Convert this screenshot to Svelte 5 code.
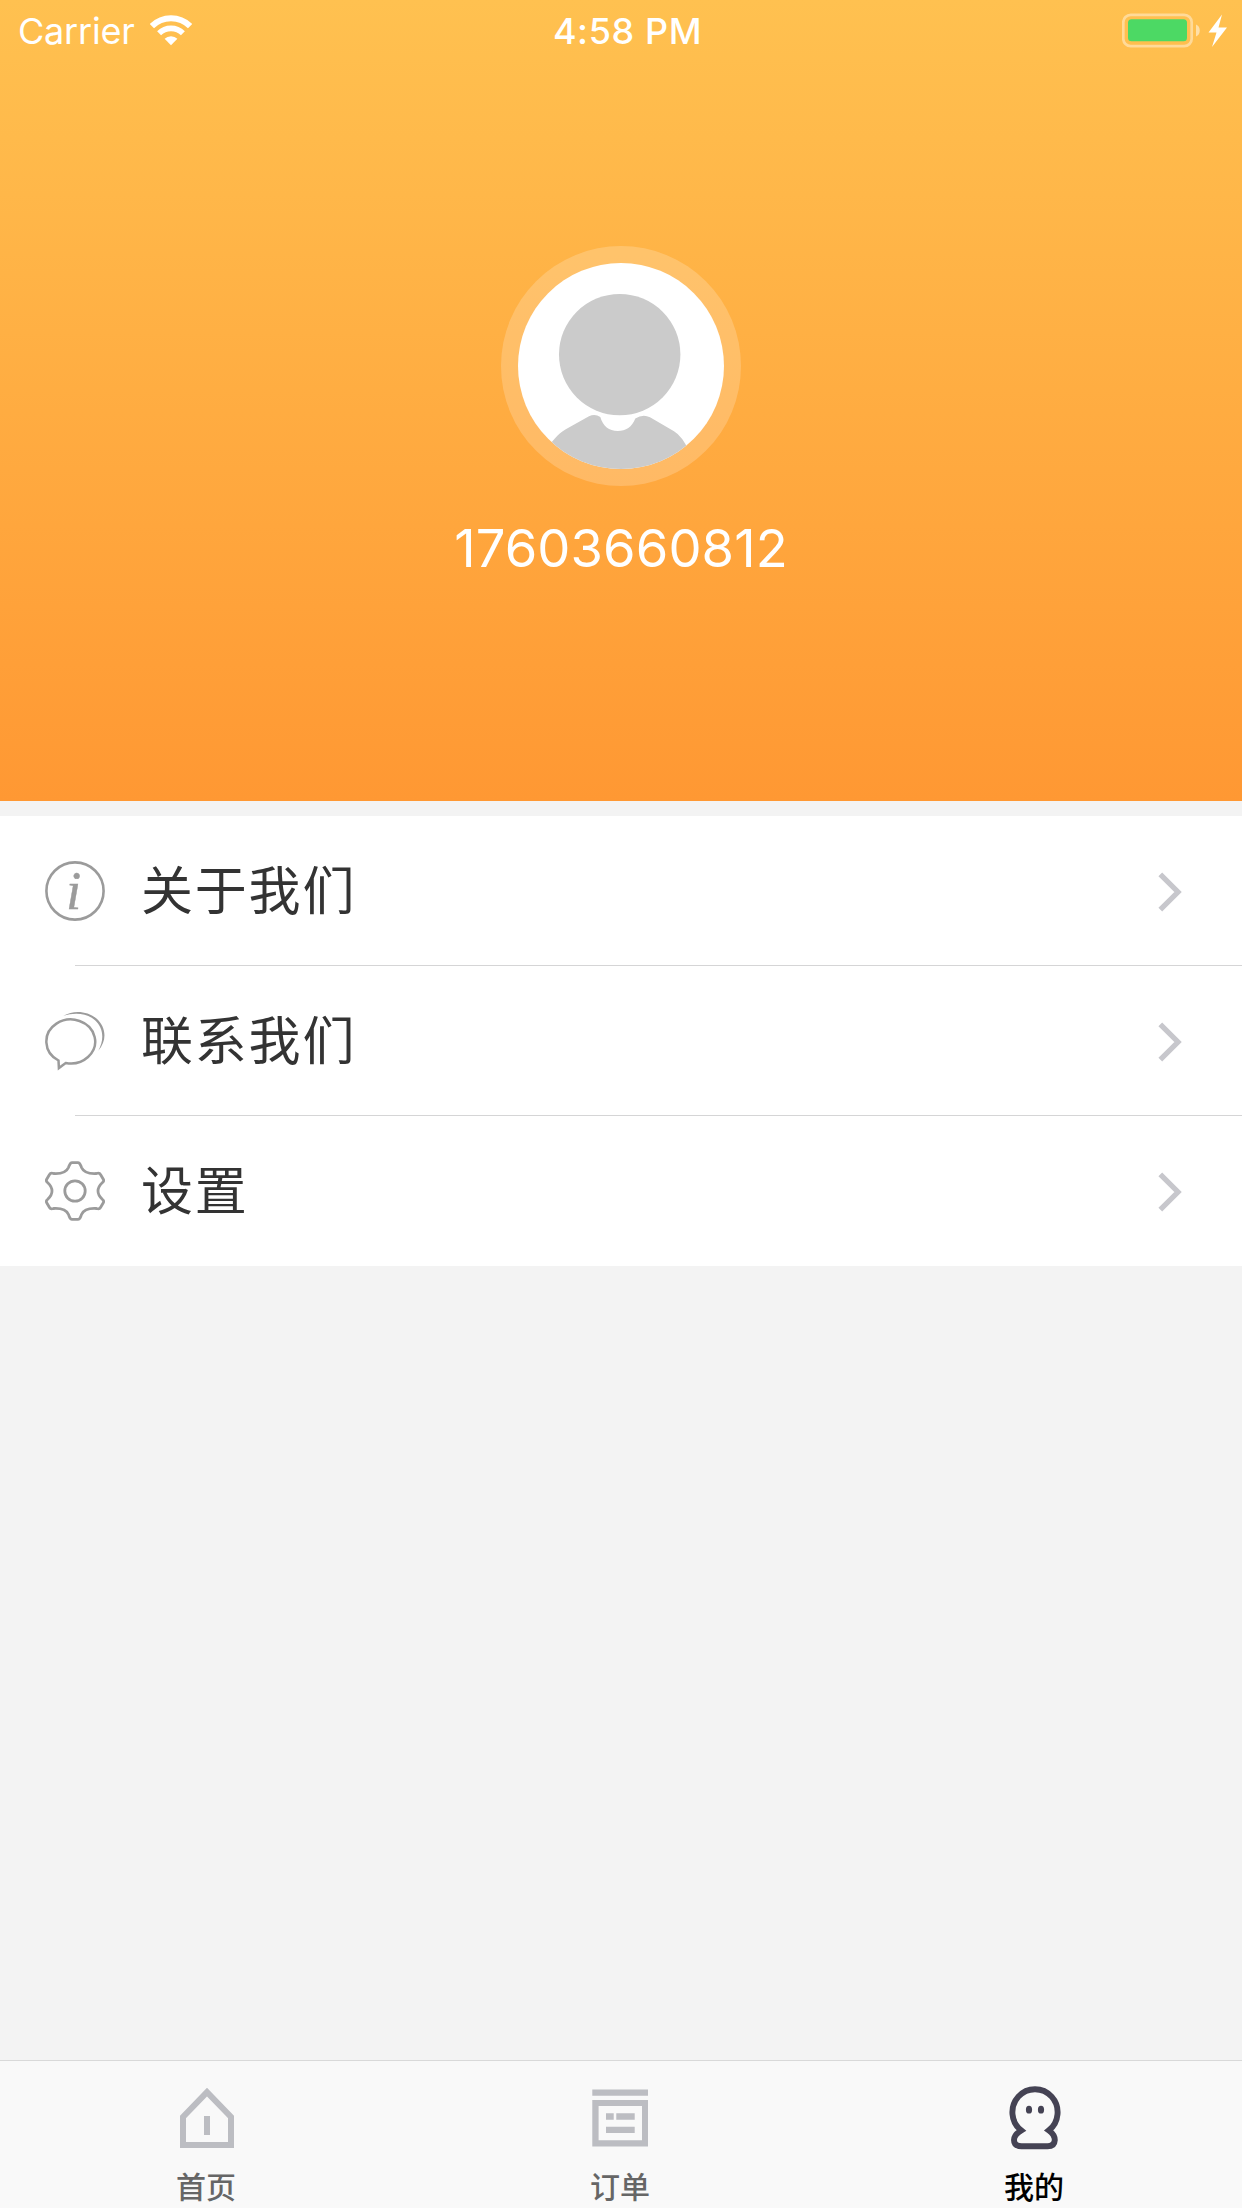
<script>
  const rows = [
    { icon: 'info', label: '关于我们' },
    { icon: 'chat', label: '联系我们' },
    { icon: 'gear', label: '设置' }
  ];
  const tabs = [
    { icon: 'home', label: '首页', active: false },
    { icon: 'order', label: '订单', active: false },
    { icon: 'me', label: '我的', active: true }
  ];
</script>

<div class="screen">
  <header class="hero">
    <div class="status">
      <div class="left">
        <span class="carrier">Carrier</span>
        <svg class="wifi" width="42" height="31" viewBox="0 0 42 31">
          <g fill="none" stroke="#fff">
            <path d="M1.9 11.1A27 27 0 0 1 40.1 11.1" stroke-width="6" />
            <path d="M9.1 18.3A16.8 16.8 0 0 1 32.9 18.3" stroke-width="5.6" />
          </g>
          <path d="M21 30.2L14.6 23.8A9 9 0 0 1 27.4 23.8Z" fill="#fff" />
        </svg>
      </div>
      <span class="time">4:58 PM</span>
      <div class="right">
        <svg width="108" height="36" viewBox="0 0 108 36">
          <rect x="1.3" y="1.8" width="68.4" height="31.4" rx="7.5" fill="none" stroke="#fff" stroke-opacity=".42" stroke-width="2.7" />
          <rect x="6" y="6.300" width="59" height="22" rx="3.5" fill="#4cd964" />
          <path d="M74 11.500C79 13 79 22 74 23.500Z" fill="#fff" fill-opacity=".5" />
          <path d="M100 1.500L86.500 19.500H94.500L90 34L105 14.500H96.500Z" fill="#fff" />
        </svg>
      </div>
    </div>
    <svg class="avatar" width="240" height="240" viewBox="0 0 240 240">
      <defs>
        <clipPath id="face"><circle cx="120" cy="120" r="103" /></clipPath>
      </defs>
      <circle cx="120" cy="120" r="120" fill="#fff" fill-opacity=".2" />
      <circle cx="120" cy="120" r="103" fill="#fff" />
      <g clip-path="url(#face)" fill="#cbcbcb">
        <circle cx="118.7" cy="108.6" r="60.7" />
        <path d="M45 205C53 191 60 186 67 182L88 170.3Q94 167.300 99.300 171C102 180 108 185 116.700 185C125 185 131 181 134.300 172.500Q142 167.500 149 171.300L173 185.300Q181 190 188 205L188 240H45Z" />
      </g>
    </svg>
    <div class="phone">17603660812</div>
  </header>

  <main class="list">
    {#each rows as row}
      <div class="row">
        <svg class="ico" width="60" height="60" viewBox="0 0 60 60">
          {#if row.icon === 'info'}
            <circle cx="30" cy="30" r="28.600" fill="none" stroke="#9b9b9b" stroke-width="2.600" />
            <text class="info" x="21" y="48">i</text>
          {:else if row.icon === 'chat'}
            <path d="M13.500 49.500A24.400 22 0 1 1 20.700 52L13.900 57Z" fill="none" stroke="#9b9b9b" stroke-width="2.500" />
            <path d="M18.300 4.800C29-1.500 43 .2 51.500 7.500C61 16 62.500 29 53.300 39.700C59.500 28.500 58.500 17 50 9.300C42 2.200 30 1.200 18.300 4.800Z" fill="#9b9b9b" />
          {:else}
            <g fill="none" stroke="#9b9b9b" stroke-width="2.800" stroke-linejoin="round">
              <path d="M27 1.600H33C35 1.600 35.300 3.500 36.500 6.500C38.500 11 43 13 51.500 12.500Q54.500 11.600 55.500 13.500L58.300 18.300Q59.300 20 57.500 21.500C51.500 27 51.500 33 57.500 38.500Q59.300 40 58.300 41.700L55.500 46.500Q54.500 48.400 51.500 47.500C43 47 38.500 49 36.500 53.500C35.300 56.500 35 58.400 33 58.400H27C25 58.400 24.700 56.500 23.500 53.500C21.500 49 17 47 8.500 47.500Q5.500 48.400 4.500 46.500L1.700 41.700Q.7 40 2.500 38.500C8.500 33 8.500 27 2.500 21.500Q.7 20 1.700 18.300L4.500 13.500Q5.500 11.600 8.500 12.500C17 13 21.500 11 23.500 6.500C24.700 3.500 25 1.600 27 1.600Z" />
              <circle cx="30" cy="30" r="10.200" />
            </g>
          {/if}
        </svg>
        <span class="label">{row.label}</span>
        <svg class="chev" width="28" height="42" viewBox="0 0 28 42">
          <path d="M4.300 3.300L22 21L4.300 38.700" fill="none" stroke="#c7c7cc" stroke-width="5.300" />
        </svg>
      </div>
    {/each}
  </main>

  <nav class="tabs">
    {#each tabs as tab}
      <div class="tab" class:active={tab.active}>
        <svg width="70" height="70" viewBox="0 0 70 70">
          {#if tab.icon === 'home'}
            <path d="M35 8.100L59 33V61H11V33Z" fill="none" stroke="#bcbdc2" stroke-width="6" />
            <path d="M32 32H38V51H32Z" fill="#bcbdc2" />
          {:else if tab.icon === 'order'}
            <g fill="#bcbdc2">
              <path d="M6.300 5.500H62V11.700H6.300Z" />
              <path fill-rule="evenodd" d="M6.300 16H62V62.500H6.300ZM12.600 22V56.200H56V22Z" />
              <path d="M20 29.300H27.700V35.700H20ZM30.300 29.300H48.700V35.700H30.300ZM20 42.700H48.700V49H20Z" />
            </g>
          {:else}
            <path d="M21.200 46.400A22.600 23 0 1 1 48.800 46.400C53 49.500 54.800 53 54.800 56Q54.500 62.300 47.500 62.300H21.500Q14 62 14 56C14 53 17 49 21.200 46.400Z" fill="none" stroke="#454354" stroke-width="5.900" />
            <ellipse cx="29" cy="25.700" rx="3.100" ry="3.900" fill="#454354" />
            <ellipse cx="41" cy="25.700" rx="3.100" ry="3.900" fill="#454354" />
          {/if}
        </svg>
        <span>{tab.label}</span>
      </div>
    {/each}
  </nav>
</div>

<style>
  :global(body) {
    margin: 0;
    background: #f3f3f3;
  }
  .screen {
    width: 1242px;
    height: 2208px;
    display: flex;
    flex-direction: column;
    background: #f3f3f3;
    font-family: Inter, 'Noto Sans CJK SC', sans-serif;
    overflow: hidden;
  }
  .hero {
    height: 801px;
    flex: none;
    display: flex;
    flex-direction: column;
    align-items: center;
    background: linear-gradient(#ffc150, #ff9833);
    color: #fff;
  }
  .status {
    width: 100%;
    height: 62px;
    box-sizing: border-box;
    padding: 0 12px 0 18px;
    display: grid;
    grid-template-columns: 1fr auto 1fr;
    align-items: center;
    font-size: 36px;
    line-height: 62px;
  }
  .left {
    display: flex;
    align-items: center;
    gap: 16px;
  }
  .carrier {
    width: 116px;
    font-weight: 400;
    letter-spacing: -0.2px;
  }
  .wifi {
    margin-top: -1px;
  }
  .time {
    font-weight: 500;
    letter-spacing: 0.6px;
    padding-left: 7px;
  }
  .right {
    display: flex;
    justify-content: flex-end;
  }
  .avatar {
    margin-top: 184px;
  }
  .phone {
    margin-top: 27px;
    font-size: 52.5px;
    line-height: 70px;
    letter-spacing: 0.1px;
  }
  .list {
    margin-top: 15px;
    background: #fff;
  }
  .row {
    height: 150px;
    box-sizing: border-box;
    padding: 0 58px 0 45px;
    display: flex;
    align-items: center;
    background: linear-gradient(#d5d5d6, #d5d5d6) 75px 149px / 100% 1px no-repeat;
  }
  .row:last-child {
    background: none;
  }
  .label {
    flex: 1;
    margin: -8px 0 0 36px;
    font-family: 'Noto Sans CJK SC', sans-serif;
    font-size: 52px;
    letter-spacing: 1.8px;
    color: #333;
  }
  .info {
    font: italic 55px 'Liberation Serif', serif;
    fill: #9b9b9b;
    stroke: #9b9b9b;
    stroke-width: 0.4px;
  }
  .chev {
    margin-top: 2px;
  }
  .tabs {
    margin-top: auto;
    height: 148px;
    box-sizing: border-box;
    border-top: 1px solid #d9d9d9;
    background: #f9f9f9;
    display: grid;
    grid-template-columns: repeat(3, 1fr);
  }
  .tab {
    display: flex;
    flex-direction: column;
    align-items: center;
    padding-top: 23px;
    font-family: 'Noto Sans CJK SC', sans-serif;
    font-size: 30px;
    font-weight: 500;
    line-height: 40px;
    color: #666;
  }
  .tab span {
    margin-top: 11px;
    margin-right: 2px;
  }
  .active {
    color: #000;
  }
</style>
